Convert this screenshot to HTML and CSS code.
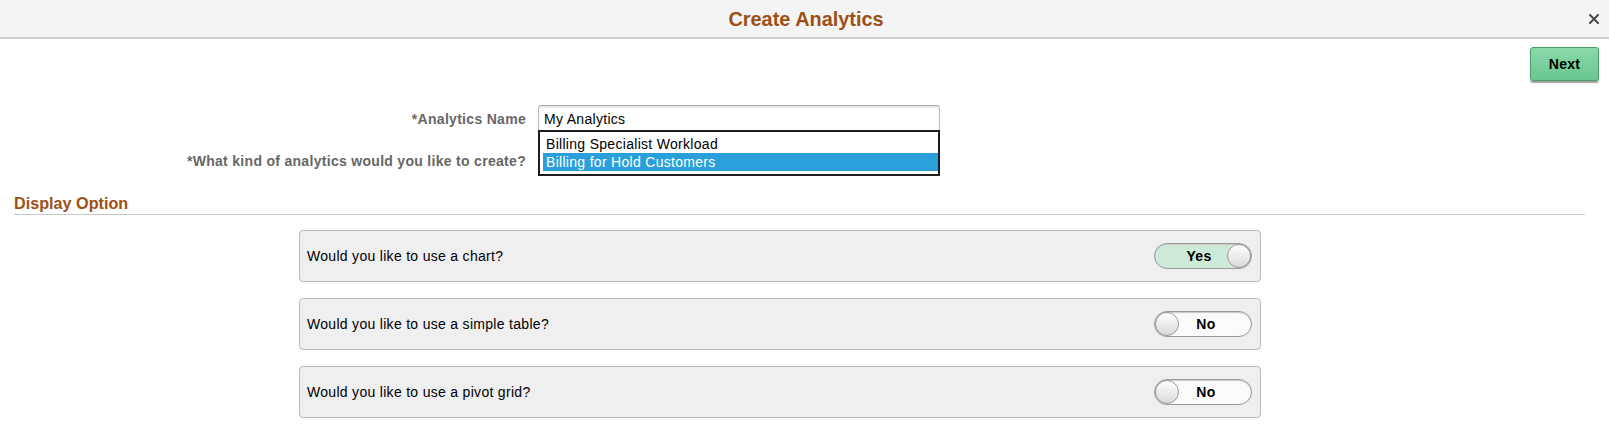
FILE: index.html
```html
<!DOCTYPE html>
<html lang="en">
<head>
<meta charset="utf-8">
<title>Create Analytics</title>
<link rel="stylesheet" href="styles.css">
</head>
<body>
<header class="titlebar">
  <h1 class="title">Create Analytics</h1>
  <button class="close" aria-label="Close">
    <svg width="10" height="10" viewBox="0 0 10 10"><path d="M1 1 L9 9 M9 1 L1 9" stroke="#4a4a4a" stroke-width="2" stroke-linecap="square"/></svg>
  </button>
</header>

<div class="toolbar">
  <button class="btn-next">Next</button>
</div>

<div class="form">
  <label class="label">*Analytics Name</label>
  <div class="field-wrap">
    <div class="input">My Analytics</div>
    <ul class="listbox">
      <li class="option">Billing Specialist Workload</li>
      <li class="option selected">Billing for Hold Customers</li>
    </ul>
  </div>
  <label class="label">*What kind of analytics would you like to create?</label>
  <div class="input select"></div>
</div>

<h2 class="section">Display Option</h2>

<div class="cards">
  <div class="card">
    <span class="question">Would you like to use a chart?</span>
    <div class="toggle on"><span class="toggle-text">Yes</span><span class="knob"></span></div>
  </div>
  <div class="card">
    <span class="question">Would you like to use a simple table?</span>
    <div class="toggle off"><span class="knob"></span><span class="toggle-text">No</span></div>
  </div>
  <div class="card">
    <span class="question">Would you like to use a pivot grid?</span>
    <div class="toggle off"><span class="knob"></span><span class="toggle-text">No</span></div>
  </div>
</div>
</body>
</html>
```

FILE: styles.css
```css
* { box-sizing: border-box; }

body {
  margin: 0;
  background: #ffffff;
  font-family: "Liberation Sans", Arial, sans-serif;
  font-size: 14px;
  letter-spacing: 0.3px;
  color: #000;
}

.titlebar {
  position: relative;
  height: 39px;
  background: #f4f4f4;
  border-bottom: 2px solid #cfcfcf;
  display: flex;
  align-items: center;
  justify-content: center;
}

.title {
  margin: 0 0 0 3px;
  font-size: 19.9px;
  font-weight: bold;
  letter-spacing: 0;
  color: #9d5016;
  line-height: 24px;
}

.close {
  position: absolute;
  right: 10px;
  top: 14px;
  width: 10px;
  height: 10px;
  padding: 0;
  border: 0;
  background: transparent;
  display: flex;
}

.toolbar {
  display: flex;
  justify-content: flex-end;
  padding: 8px 10px 0 0;
}

.btn-next {
  width: 69px;
  height: 34px;
  border: 1px solid #4a9a6b;
  border-radius: 3px;
  background: linear-gradient(#8ad9ab, #69c690);
  box-shadow: 0 2px 1px #a0a0a0;
  font-family: "Liberation Sans", Arial, sans-serif;
  font-size: 14px;
  font-weight: bold;
  letter-spacing: 0.3px;
  color: #000;
  padding: 0;
}

.form {
  margin-top: 24px;
  display: grid;
  grid-template-columns: 526px 402px;
  grid-auto-rows: 28px;
  column-gap: 12px;
  row-gap: 14px;
}

.label {
  display: flex;
  align-items: center;
  justify-content: flex-end;
  font-weight: bold;
  color: #676767;
}

.field-wrap { position: relative; }

.input {
  height: 28px;
  border: 1px solid #bdbdbd;
  border-top-color: #a9a9a9;
  border-radius: 3px;
  background: #fff;
  box-shadow: inset 0 2px 2px #e6e6e6;
  padding: 4px 0 0 5px;
  line-height: 18px;
}

.listbox {
  position: absolute;
  left: 0;
  top: 25px;
  width: 402px;
  margin: 0;
  padding: 3px 0 3px 3px;
  list-style: none;
  background: #fff;
  border: 2px solid #1e1e1e;
  z-index: 2;
}

.option {
  height: 18px;
  line-height: 18px;
  padding-left: 3px;
  white-space: nowrap;
}

.option.selected {
  background: #29a0da;
  color: #fff;
}

.section {
  margin: 18px 24px 0 14px;
  padding-bottom: 1px;
  font-size: 16.2px;
  line-height: 20px;
  letter-spacing: 0;
  font-weight: bold;
  color: #9d5016;
  border-bottom: 1px solid #c9c9c9;
}

.cards {
  margin: 15px 0 0 299px;
  width: 962px;
  display: flex;
  flex-direction: column;
  gap: 16px;
}

.card {
  height: 52px;
  border: 1px solid #bababa;
  border-radius: 4px;
  background: #efefef;
  display: flex;
  align-items: center;
  justify-content: space-between;
  padding: 0 8px 0 7px;
}

.toggle {
  width: 98px;
  height: 26px;
  border-radius: 13px;
  border: 1px solid #9a9a9a;
  box-shadow: inset 0 1px 1px #c8c8c8;
  display: flex;
  align-items: center;
  font-weight: bold;
}

.toggle.on { background: #cde9d8; }
.toggle.off { background: #fbfbfb; }

.toggle-text {
  flex: 1;
  text-align: center;
}

.toggle.on .toggle-text { padding-left: 16px; }
.toggle.off .toggle-text { padding-right: 18px; }

.knob {
  width: 24px;
  height: 24px;
  border-radius: 50%;
  border: 1px solid #999;
  background: linear-gradient(#ffffff, #d9d9d9);
  flex: none;
}
```
